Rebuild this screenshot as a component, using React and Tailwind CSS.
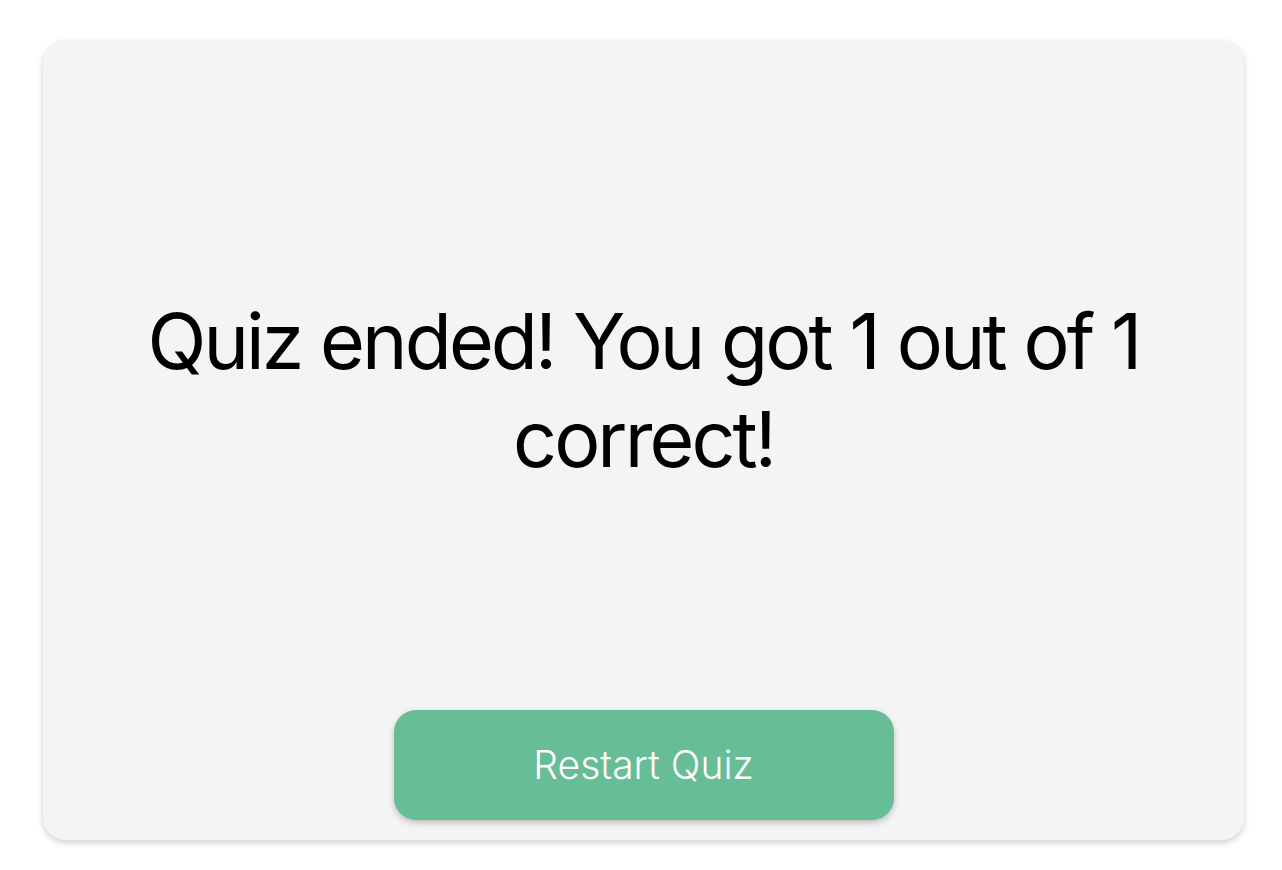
export default function App() {
  return (
    <div className="min-h-screen bg-white px-[43px] pt-10 pb-[30px]" style={{ fontFamily: 'Inter, "Noto Sans", sans-serif' }}>
      <div className="flex h-[800px] w-[1201px] flex-col items-center rounded-[22px] bg-[#f4f4f4] px-10 pb-5 shadow-[0_3px_6px_rgba(0,0,0,0.18)]">
        <div className="flex flex-1 items-center justify-center pt-[30px]">
          <h1 className="text-center text-[77px] font-normal leading-[98px] tracking-[-0.038em] text-black">
            Quiz ended! You got 1 out of 1 correct!
          </h1>
        </div>
        <button className="h-[110px] w-[500px] rounded-[22px] bg-[#66bd96] text-[39px] font-light text-white shadow-[0_3px_6px_rgba(0,0,0,0.22)]">
          Restart Quiz
        </button>
      </div>
    </div>
  );
}
